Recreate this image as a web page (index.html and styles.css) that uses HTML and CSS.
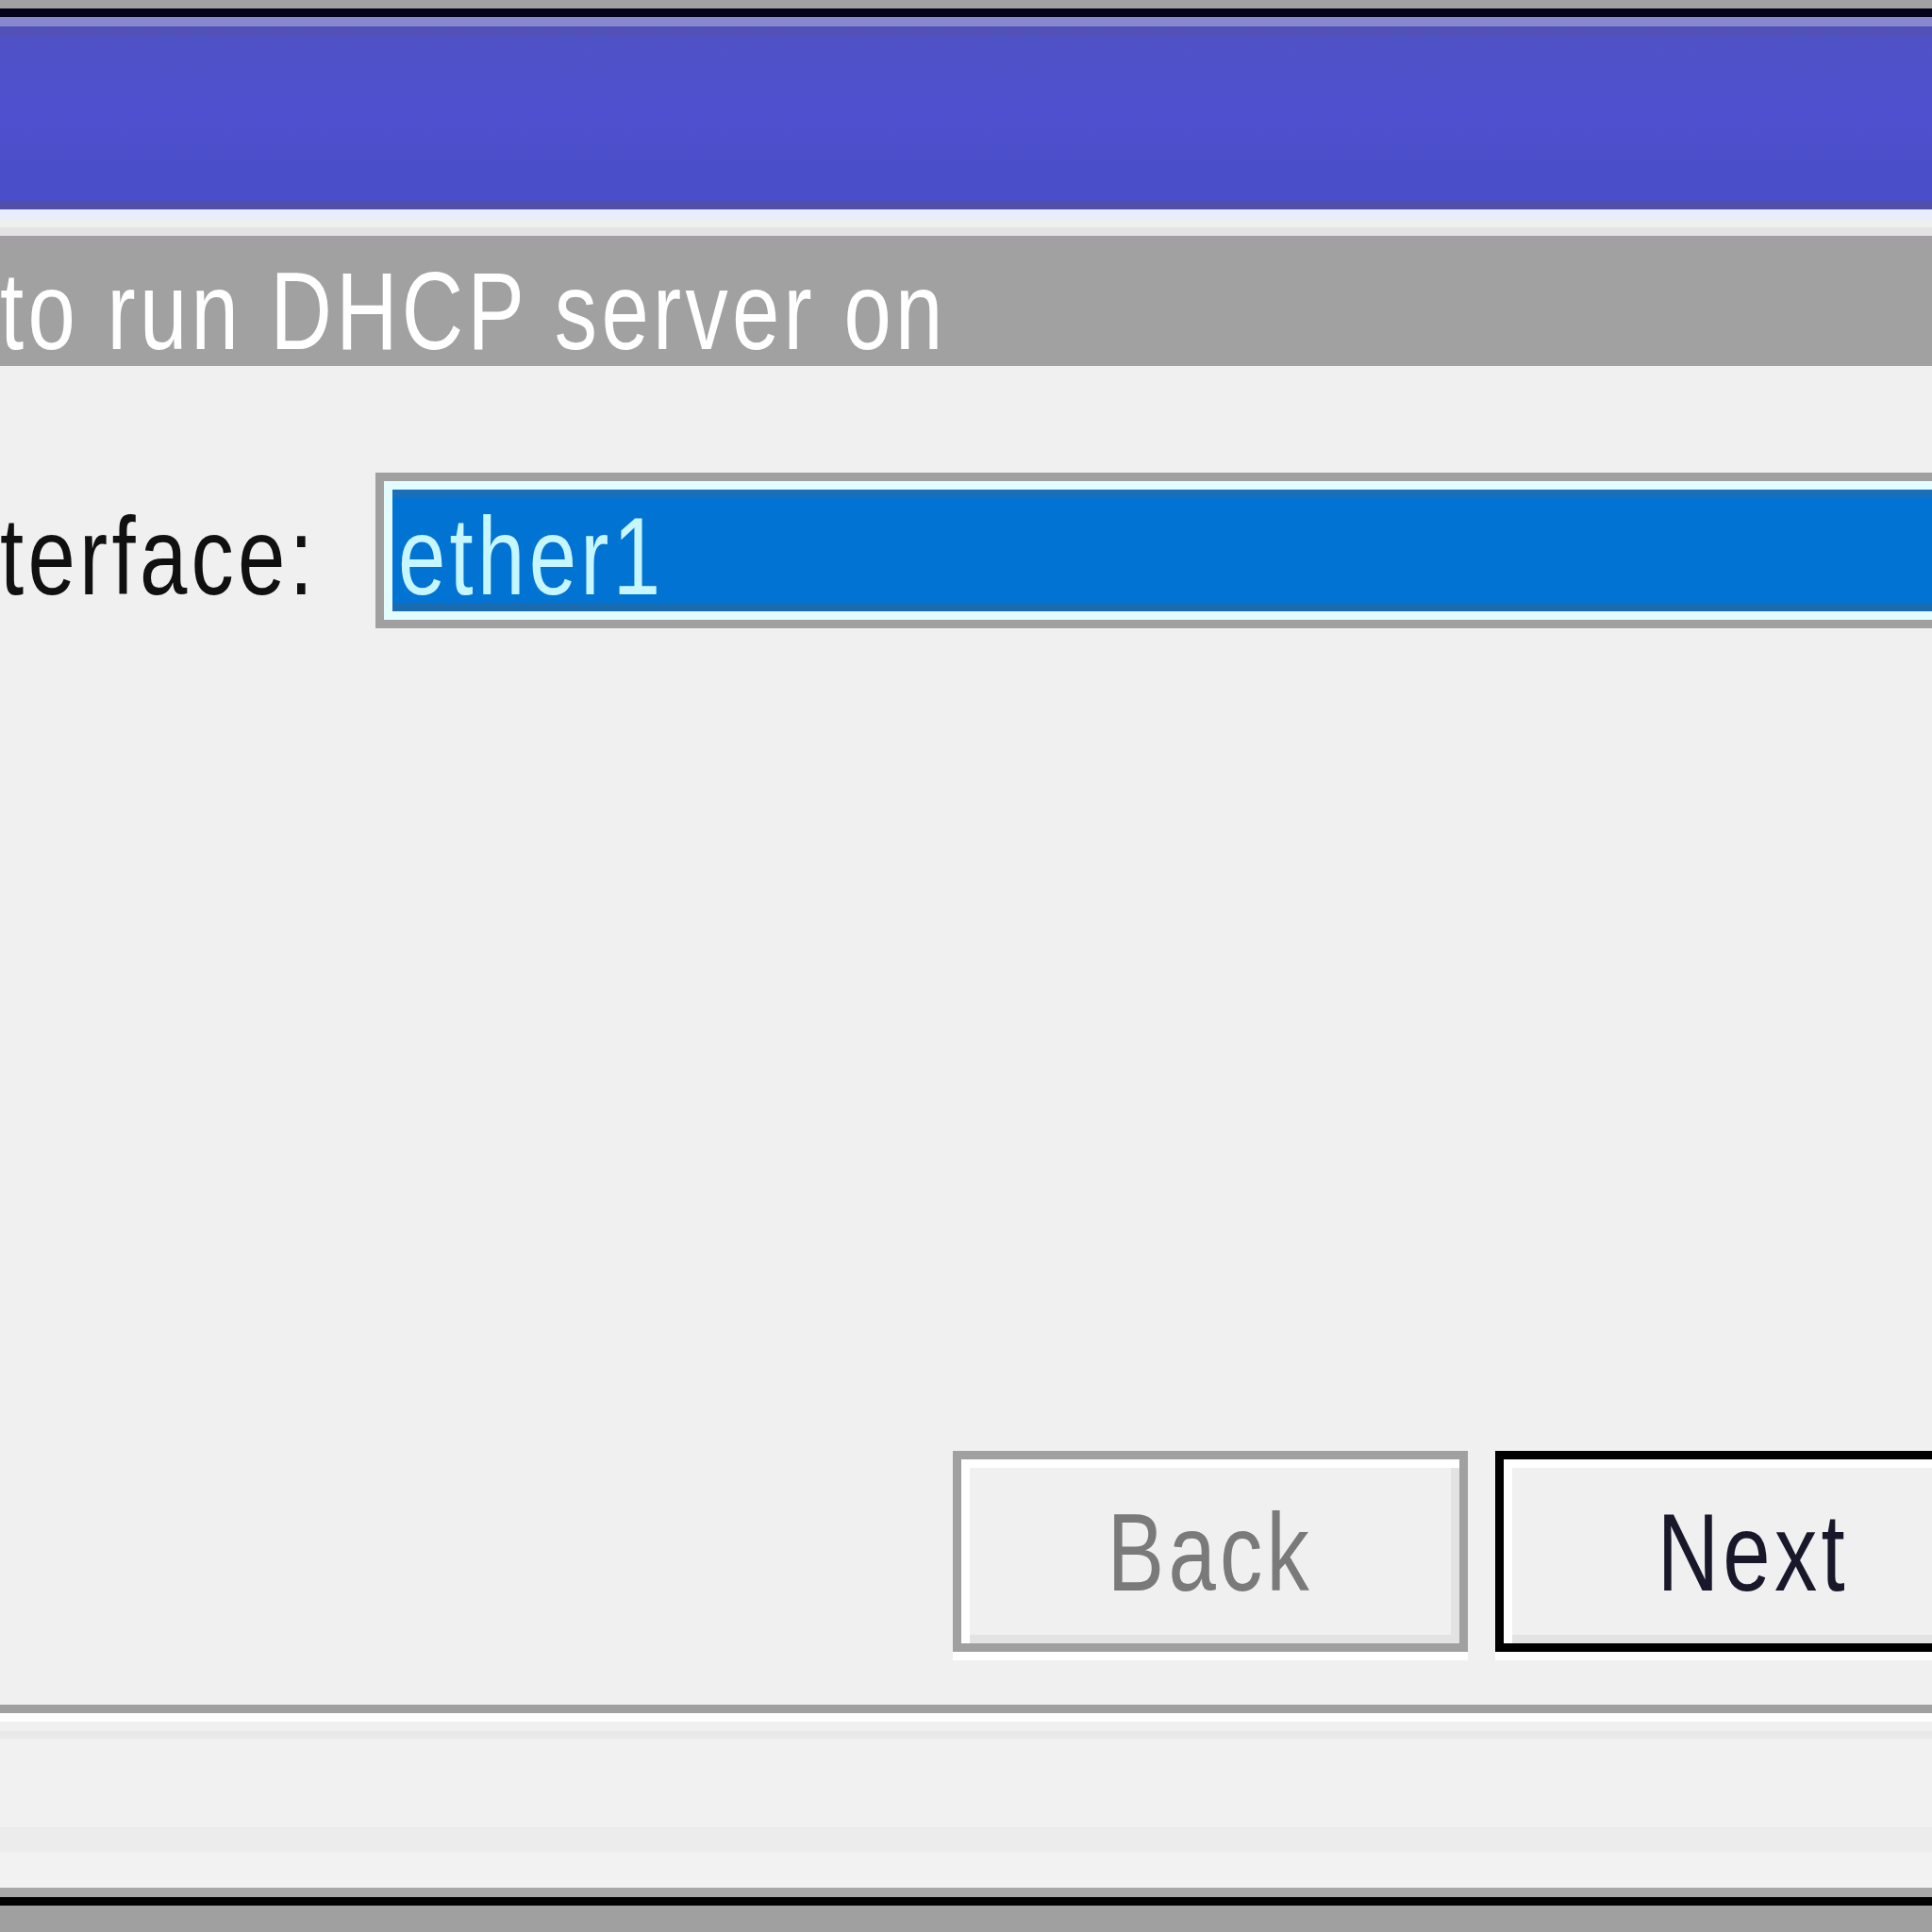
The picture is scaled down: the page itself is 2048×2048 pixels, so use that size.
FILE: index.html
```html
<!DOCTYPE html>
<html lang="en">
<head>
<meta charset="utf-8">
<title>DHCP Setup</title>
<link rel="stylesheet" href="styles.css">
</head>
<body>
<div class="window">
  <div class="frame-top"></div>
  <div class="title-dark"></div>
  <div class="title-hi"></div>
  <div class="titlebar"></div>
  <div class="title-under"></div>
  <div class="banner"><span class="txt">to run DHCP server on</span></div>
  <div class="content">
    <div class="field-row">
      <div class="label"><span class="txt">terface:</span></div>
      <div class="input">
        <div class="input-inner">
          <div class="selection"><span class="txt">ether1</span></div>
        </div>
      </div>
    </div>
  </div>
  <div class="spacer"></div>
  <div class="buttons">
    <div class="btn btn-disabled"><span class="txt">Back</span></div>
    <div class="btn btn-default"><span class="txt">Next</span></div>
  </div>
  <div class="separator"></div>
  <div class="footer"></div>
  <div class="frame-bottom"></div>
</div>
</body>
</html>
```

FILE: styles.css
```css
html, body {
  margin: 0;
  padding: 0;
}
body {
  width: 2048px;
  height: 2048px;
  overflow: hidden;
  background: #f0f0f0;
  font-family: "Liberation Sans", Arial, sans-serif;
}
.window {
  width: 2048px;
  height: 2048px;
  display: flex;
  flex-direction: column;
}
.txt {
  display: inline-block;
  font-size: 116px;
  line-height: 116px;
  letter-spacing: 5.5px;
  white-space: nowrap;
  transform: scaleX(0.78);
  transform-origin: left center;
}
.frame-top {
  height: 9px;
  background: #a2a2a2;
  flex: none;
}
.title-dark {
  height: 9px;
  background: #03031a;
  flex: none;
}
.title-hi {
  height: 10px;
  background: #8888d0;
  flex: none;
}
.titlebar {
  height: 194px;
  flex: none;
  background: linear-gradient(to bottom,
    #5252b6 0px, #5252b6 9px,
    #4f52c6 12px,
    #4f50cf 90px,
    #4b4ec9 150px,
    #4a4ec8 185px,
    #5050a8 185px, #5050a8 194px);
}
.title-under {
  height: 28px;
  flex: none;
  background: linear-gradient(to bottom,
    #e8ecfb 0px, #e8ecfb 11px,
    #eef0ee 11px, #eef0ee 19px,
    #e4e4e4 19px, #e4e4e4 28px);
}
.banner {
  height: 138px;
  box-sizing: border-box;
  flex: none;
  border-top: 9px solid #a49fa4;
  background: #a1a1a1;
  padding-top: 13px;
  color: #ffffff;
}
.banner .txt {
  color: #ffffff;
}
.content {
  flex: none;
  padding-top: 113px;
}
.field-row {
  display: flex;
  align-items: baseline;
}
.label {
  flex: none;
  width: 398px;
  color: #101010;
}
.input {
  flex: none;
  width: 1700px;
  border: 9px solid #a0a0a0;
  background: #e2fcff;
}
.input-inner {
  border: 9px solid #e2fcff;
}
.selection {
  height: 129px;
  box-sizing: border-box;
  padding: 13px 0 0 6px;
  background: #0073d3;
  box-shadow: inset 0 9px 0 #1a6fb8, inset 0 -9px 0 #1a6cb2;
  color: #c6f6ff;
}
.spacer {
  flex: 1;
}
.buttons {
  flex: none;
  display: flex;
  gap: 29px;
  padding-left: 1010px;
  height: 213px;
}
.btn {
  flex: none;
  width: 546px;
  height: 213px;
  box-sizing: border-box;
  border: 9px solid #a0a0a0;
  background: #f0f0f0;
  box-shadow: inset 9px 9px 0 #ffffff, inset -9px -9px 0 #e3e3e3, 0 9px 0 #ffffff;
  text-align: center;
  padding-top: 4px;
}
.btn .txt {
  line-height: 191px;
  transform-origin: center center;
}
.btn-disabled {
  color: #7a7a7a;
}
.btn-default {
  border-color: #000000;
  color: #18182a;
}
.separator {
  flex: none;
  margin-top: 56px;
  height: 9px;
  background: #a0a0a0;
  border-bottom: 9px solid #ffffff;
}
.footer {
  flex: none;
  height: 176px;
  background: linear-gradient(to bottom,
    #f0f0f0 0px, #f0f0f0 10px,
    #e9e9e9 10px, #e9e9e9 18px,
    #f1f1f1 18px, #f1f1f1 112px,
    #ececec 112px, #ececec 138px,
    #f2f2f2 138px);
}
.frame-bottom {
  flex: none;
  height: 47px;
  background: linear-gradient(to bottom,
    #a8a8a8 0px, #a8a8a8 10px,
    #000000 10px, #000000 19px,
    #a0a0a0 19px);
}
```
